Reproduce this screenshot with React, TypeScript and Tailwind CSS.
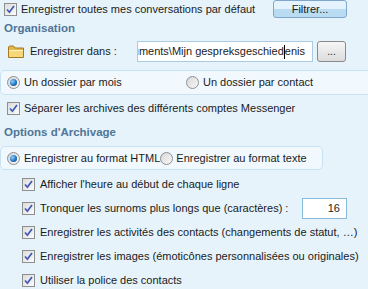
import React from "react";

// ── Small controls ────────────────────────────────────────────────────────────

function Check() {
  return (
    <span className="flex h-[13px] w-[13px] shrink-0 items-center justify-center border border-[#8e8f8f] bg-gradient-to-br from-[#dcdcdc] to-[#fbfbfb]">
      <svg width="9" height="9" viewBox="0 0 9 9">
        <path d="M1 4.5 L3.4 7.2 L8 1" fill="none" stroke="#3d58b8" strokeWidth="1.7" />
      </svg>
    </span>
  );
}

function Radio({ on }: { on?: boolean }) {
  return (
    <span className="flex h-[13px] w-[13px] shrink-0 items-center justify-center rounded-full border border-[#8e8f8f] bg-gradient-to-br from-[#d6d6d6] to-[#fafafa]">
      {on && (
        <span className="h-[7px] w-[7px] rounded-full bg-[radial-gradient(circle_at_35%_35%,#8fd0ff,#1c6fb8_60%,#0c3e7a)]" />
      )}
    </span>
  );
}

function Folder() {
  return (
    <svg width="16" height="13" viewBox="0 0 16 13" className="shrink-0">
      <path d="M0.5 2 L0.5 12.5 L15.5 12.5 L15.5 3 L7 3 L5.5 1 L1.5 1 Z" fill="#e3b74a" stroke="#a47a1c" />
      <path d="M1 5 L15 5 L15 12 L1 12 Z" fill="#f7d77a" />
      <path d="M1 5.5 L15 5.5" stroke="#fff3c4" />
    </svg>
  );
}

function CheckRow({ children }: { children: React.ReactNode }) {
  return <div className="flex h-[24px] items-center gap-[5px] whitespace-nowrap pl-[22px]">{children}</div>;
}

// ── Main Component ────────────────────────────────────────────────────────────

export default function App() {
  return (
    <div className="relative h-[289px] w-[368px] overflow-hidden whitespace-nowrap bg-[#e6f3fb] text-[11px] text-[#1b1b1b] [font-family:'Liberation_Sans',Arial,sans-serif]">
      {/* top row */}
      <div className="flex h-[18px] items-center">
        <div className="ml-[4px] flex items-center gap-[4px]">
          <Check />
          <span>Enregistrer toutes mes conversations par défaut</span>
        </div>
        <button className="ml-auto mr-[21px] h-[18px] w-[74px] rounded-[3px] border border-[#7fa6cf] bg-gradient-to-b from-[#e4f3fd] from-50% to-[#b9dcf3] to-50% text-[#1b1b1b]">
          Filtrer...
        </button>
      </div>

      {/* Organisation */}
      <div className="flex h-[22px] items-end pl-[4px] pb-[3px] text-[11.5px] font-bold text-[#4f7597]">
        Organisation
      </div>
      <div className="mt-[1px] flex h-[21px] items-center">
        <div className="ml-[8px] flex w-[129px] items-center gap-[6px]">
          <Folder />
          <span>Enregistrer dans :</span>
        </div>
        <div className="flex h-[21px] w-[176px] items-center justify-end overflow-hidden border border-[#a9cbe3] bg-white pr-[7px]">
          <span className="shrink-0">uments\Mijn gespreksgeschied</span>
          <span className="h-[14px] w-px shrink-0 bg-black" />
          <span className="shrink-0">enis</span>
        </div>
        <button className="ml-[4px] flex h-[21px] w-[29px] items-end justify-center rounded-[3px] border border-[#8a8a8a] bg-gradient-to-b from-[#f6f6f6] to-[#dcdcdc] pb-[4px] text-[10px] leading-none">
          ...
        </button>
      </div>

      {/* radio panel 1 */}
      <div className="mr-[-8px] mt-[8px] flex h-[25px] items-center rounded-l-[5px] border border-[#c8e2f3] bg-[#f1f9fe]">
        <div className="ml-[6px] flex w-[179px] items-center gap-[4px]">
          <Radio on />
          <span>Un dossier par mois</span>
        </div>
        <div className="flex items-center gap-[4px]">
          <Radio />
          <span>Un dossier par contact</span>
        </div>
      </div>

      <div className="mt-[3px] flex h-[20px] items-center gap-[4px] pl-[7px]">
        <Check />
        <span>Séparer les archives des différents comptes Messenger</span>
      </div>

      {/* Options d'Archivage */}
      <div className="flex h-[28px] items-end pl-[4px] pb-[5px] text-[11.5px] font-bold text-[#4f7597]">
        Options d'Archivage
      </div>
      <div className="flex h-[24px] w-[323px] items-center rounded-[5px] border border-[#c8e2f3] bg-[#f1f9fe]">
        <div className="ml-[6px] flex items-center gap-[4px]">
          <Radio on />
          <span>Enregistrer au format HTML</span>
        </div>
        <div className="flex items-center gap-[3px]">
          <Radio />
          <span>Enregistrer au format texte</span>
        </div>
      </div>

      <div className="mt-[2px]">
        <CheckRow>
          <Check />
          <span>Afficher l'heure au début de chaque ligne</span>
        </CheckRow>
        <CheckRow>
          <Check />
          <span>Tronquer les surnoms plus longs que (caractères) :</span>
          <div className="ml-auto mr-[21px] flex h-[21px] w-[45px] shrink-0 items-center justify-end border border-[#86b9dc] bg-white pr-[6px]">
            16
          </div>
        </CheckRow>
        <CheckRow>
          <Check />
          <span>Enregistrer les activités des contacts (changements de statut, …)</span>
        </CheckRow>
        <CheckRow>
          <Check />
          <span>Enregistrer les images (émoticônes personnalisées ou originales)</span>
        </CheckRow>
        <CheckRow>
          <Check />
          <span>Utiliser la police des contacts</span>
        </CheckRow>
      </div>
    </div>
  );
}
